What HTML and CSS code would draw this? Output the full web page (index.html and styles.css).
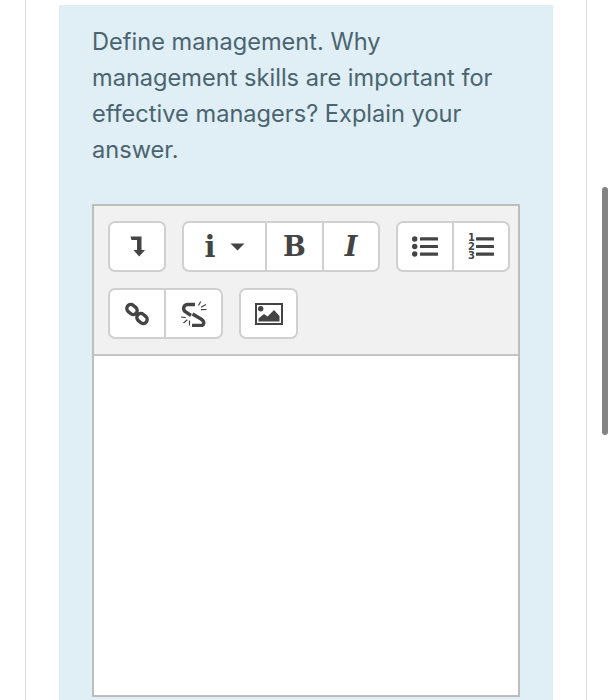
FILE: index.html
```html
<!doctype html>
<html lang="en">
  <head>
    <meta charset="UTF-8" />
    <title>Question</title>
    <link rel="stylesheet" href="styles.css">
  </head>
  <body>
    <div class="page">
      <div class="question">
        <p class="question-text">Define management. Why management skills are important for effective managers? Explain your answer.</p>
        <div class="editor">
          <div class="toolbar">
            <div class="toolbar-row">
              <div class="group">
                <button class="btn" aria-label="Collapse">
                  <svg width="15" height="21" viewBox="0 0 15 21"><path class="icon" d="M0.500 0.500H11.500V14H15L9.200 20.500L3.500 14H7V4H1.500Z"/></svg>
                </button>
              </div>
              <div class="group">
                <button class="btn btn-style">
                  <span class="letter-i">i</span>
                  <svg width="15" height="8" viewBox="0 0 15 8"><path class="icon" d="M0.500 0.500H14.500L7.500 7.500Z"/></svg>
                </button>
                <button class="btn btn-letter btn-wide">B</button>
                <button class="btn btn-letter btn-italic">I</button>
              </div>
              <div class="group">
                <button class="btn" aria-label="Bullet list">
                  <svg width="26" height="21" viewBox="0 0 26 21">
                    <circle class="icon" cx="2.700" cy="3" r="2.700"/>
                    <circle class="icon" cx="2.700" cy="10.500" r="2.700"/>
                    <circle class="icon" cx="2.700" cy="18" r="2.700"/>
                    <rect class="icon" x="8" y="1.300" width="18" height="3.200" rx="0.500"/>
                    <rect class="icon" x="8" y="8.900" width="18" height="3.200" rx="0.500"/>
                    <rect class="icon" x="8" y="16.500" width="18" height="3.200" rx="0.500"/>
                  </svg>
                </button>
                <button class="btn" aria-label="Numbered list">
                  <svg width="26" height="27" viewBox="0 0 26 27">
                    <text class="num" x="0" y="8">1</text>
                    <text class="num" x="0" y="16.800">2</text>
                    <text class="num" x="0" y="25.500">3</text>
                    <rect class="icon" x="8" y="4.300" width="18" height="3.200" rx="0.500"/>
                    <rect class="icon" x="8" y="11.900" width="18" height="3.200" rx="0.500"/>
                    <rect class="icon" x="8" y="19.500" width="18" height="3.200" rx="0.500"/>
                  </svg>
                </button>
              </div>
            </div>
            <div class="toolbar-row">
              <div class="group">
                <button class="btn" aria-label="Link">
                  <svg width="24" height="24" viewBox="0 0 24 24">
                    <rect class="stroke" x="1.500" y="3.500" width="11" height="8" rx="4" transform="rotate(40 7 7.500)"/>
                    <rect class="stroke" x="11.500" y="12.500" width="11" height="8" rx="4" transform="rotate(40 17 16.500)"/>
                  </svg>
                </button>
                <button class="btn btn-wide" aria-label="Unlink">
                  <svg width="26" height="26" viewBox="0 0 26 26">
                    <path class="stroke" d="M14 3.500H7C2.500 3.500 1.500 8 4 10.500L10 14.500"/>
                    <path class="stroke" d="M11.500 13L20 18C24.500 21 23 25 19 24.500H11"/>
                    <path class="thin" d="M19.700 0.500L17.500 4.500M25 3.500L20 6.300M25.500 8.500L20 8.700M0 16L4.700 16.700M2.500 22L6.300 18.700M8.500 19.500V24.500"/>
                  </svg>
                </button>
              </div>
              <div class="group">
                <button class="btn btn-wide" aria-label="Image">
                  <svg width="28" height="22" viewBox="0 0 28 22">
                    <rect class="frame" x="1" y="1" width="26" height="20"/>
                    <circle class="icon" cx="5.700" cy="5.700" r="2.700"/>
                    <path class="icon" d="M3.500 18.500V15.500L9 11L12.500 13.500L19 7L24.500 13V18.500Z"/>
                  </svg>
                </button>
              </div>
            </div>
          </div>
          <div class="editor-content"></div>
        </div>
      </div>
    </div>
    <div class="scroll-thumb"></div>
  </body>
</html>
```

FILE: styles.css
```css
html,
body {
  height: 700px;
  overflow: hidden;
}
body {
  margin: 0;
  background: #fff;
  font-family: Inter, "Liberation Sans", sans-serif;
}
.page {
  box-sizing: border-box;
  width: 562px;
  height: 700px;
  margin-left: 25px;
  padding: 5px 33px 0;
  border-left: 1px solid #dedede;
  border-right: 1px solid #dedede;
}
.question {
  box-sizing: border-box;
  width: 494px;
  height: 695px;
  padding: 19px 33px 0;
  background: #e0eff5;
}
.question-text {
  margin: 0;
  height: 180px;
  font-size: 23.600px;
  line-height: 36px;
  color: #4a6470;
}
.editor {
  box-sizing: border-box;
  width: 428px;
  height: 493px;
  display: flex;
  flex-direction: column;
  border: 2px solid #bdbdbd;
  background: #fff;
}
.toolbar {
  box-sizing: border-box;
  height: 150px;
  padding: 15px 8px 0 14px;
  display: flex;
  flex-direction: column;
  gap: 16px;
  background: #f1f1f1;
  border-bottom: 2px solid #c4c4c4;
}
.toolbar-row {
  display: flex;
  gap: 16px;
}
.group {
  display: flex;
  height: 51px;
  box-sizing: border-box;
  border: 2px solid #d0d0d0;
  border-radius: 7px;
  background: #fff;
}
.btn {
  box-sizing: content-box;
  width: 54px;
  padding: 0;
  display: flex;
  align-items: center;
  justify-content: center;
  border: none;
  border-left: 2px solid #d0d0d0;
  background: none;
  color: #444;
  font-family: "DejaVu Serif", "Liberation Serif", serif;
}
.btn:first-child {
  border-left: none;
}
.btn-style {
  width: 81px;
  gap: 14px;
}
.letter-i {
  font-size: 29px;
  font-weight: bold;
}
.btn-letter {
  font-size: 27px;
  font-weight: bold;
}
.btn-wide {
  width: 55px;
}
.btn-italic {
  font-style: italic;
}
.icon {
  fill: #444;
}
.frame {
  fill: none;
  stroke: #444;
  stroke-width: 2;
}
.stroke {
  fill: none;
  stroke: #444;
  stroke-width: 3.400;
}
.thin {
  fill: none;
  stroke: #444;
  stroke-width: 1.200;
}
.num {
  fill: #444;
  font-family: "DejaVu Sans", sans-serif;
  font-size: 10px;
  font-weight: bold;
}
.editor-content {
  flex: 1;
}
.scroll-thumb {
  position: absolute;
  left: 602px;
  top: 187px;
  width: 6px;
  height: 248px;
  border-radius: 3px;
  background: #848484;
}
```
